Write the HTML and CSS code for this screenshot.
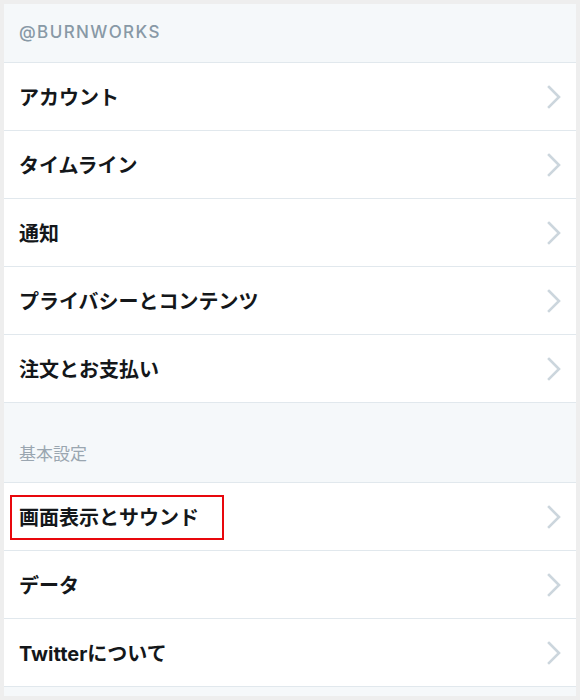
FILE: index.html
```html
<!DOCTYPE html>
<html lang="ja">
<head>
<meta charset="utf-8">
<link rel="stylesheet" href="styles.css">
</head>
<body>
<div class="frame">
  <div class="section-head head-top">@BURNWORKS</div>
  <ul class="list">
    <li class="row"><span class="label">アカウント</span><svg class="chev" viewBox="0 0 14 24"><path d="M2 2 L12 12 L2 22"/></svg></li>
    <li class="row"><span class="label">タイムライン</span><svg class="chev" viewBox="0 0 14 24"><path d="M2 2 L12 12 L2 22"/></svg></li>
    <li class="row"><span class="label">通知</span><svg class="chev" viewBox="0 0 14 24"><path d="M2 2 L12 12 L2 22"/></svg></li>
    <li class="row"><span class="label">プライバシーとコンテンツ</span><svg class="chev" viewBox="0 0 14 24"><path d="M2 2 L12 12 L2 22"/></svg></li>
    <li class="row"><span class="label">注文とお支払い</span><svg class="chev" viewBox="0 0 14 24"><path d="M2 2 L12 12 L2 22"/></svg></li>
  </ul>
  <div class="section-head head-sub">基本設定</div>
  <ul class="list">
    <li class="row highlighted"><span class="label">画面表示とサウンド</span><span class="mark"></span><svg class="chev" viewBox="0 0 14 24"><path d="M2 2 L12 12 L2 22"/></svg></li>
    <li class="row"><span class="label">データ</span><svg class="chev" viewBox="0 0 14 24"><path d="M2 2 L12 12 L2 22"/></svg></li>
    <li class="row"><span class="label">Twitterについて</span><svg class="chev" viewBox="0 0 14 24"><path d="M2 2 L12 12 L2 22"/></svg></li>
  </ul>
  <div class="foot"></div>
</div>
</body>
</html>
```

FILE: styles.css
```css
html, body {
  margin: 0;
  padding: 0;
  background: #eeeeee;
}
body {
  padding: 4px;
  font-family: "Noto Sans CJK JP", "Noto Sans", sans-serif;
}
.frame {
  background: #f5f8fa;
  width: 572px;
  height: 692px;
  overflow: hidden;
}
.section-head {
  box-sizing: border-box;
  color: #8899a6;
  padding-left: 15px;
  border-bottom: 1px solid #e1e8ed;
}
.head-top {
  height: 59px;
  font-family: "Inter", "Liberation Sans", sans-serif;
  font-weight: 500;
  font-size: 17px;
  letter-spacing: 1.4px;
  line-height: 56px;
}
.head-sub {
  height: 80px;
  font-size: 17px;
  color: #9aa6b0;
  padding-top: 38px;
  line-height: 24px;
}
.list {
  list-style: none;
  margin: 0;
  padding: 0;
  background: #ffffff;
}
.row {
  position: relative;
  box-sizing: border-box;
  height: 68px;
  display: flex;
  align-items: center;
  justify-content: space-between;
  padding: 0 15px 0 15px;
  border-bottom: 1px solid #e1e8ed;
}
.label {
  font-family: "Inter", "Noto Sans CJK JP", sans-serif;
  font-size: 20px;
  font-weight: 700;
  color: #14171a;
  letter-spacing: 0;
}
.chev {
  width: 14px;
  height: 24px;
}
.chev path {
  fill: none;
  stroke: #ccd6dd;
  stroke-width: 2.6;
  stroke-linecap: square;
}
.mark {
  position: absolute;
  left: 6px;
  top: 12px;
  width: 210px;
  height: 41px;
  border: 2px solid #e8080d;
}
.foot {
  height: 9px;
  background: #f5f8fa;
}
```
